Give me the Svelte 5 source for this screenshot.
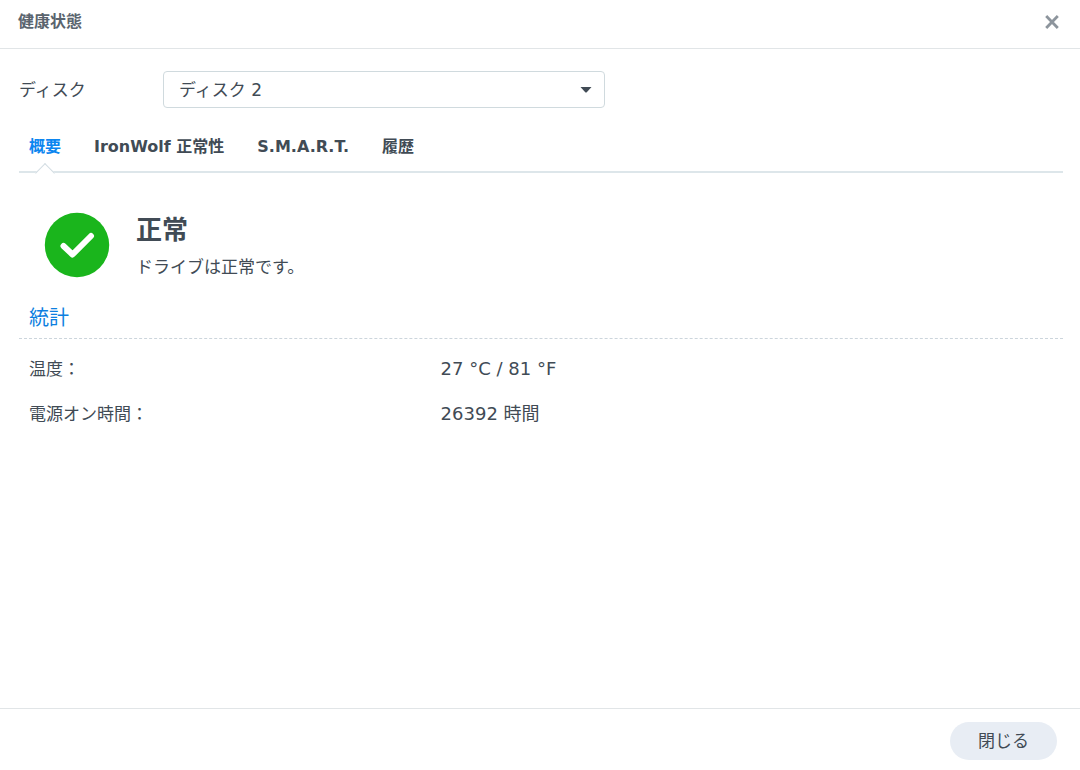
<script>
  let disks = ['ディスク 1', 'ディスク 2', 'ディスク 3', 'ディスク 4'];
  let disk = $state('ディスク 2');

  const tabs = ['概要', 'IronWolf 正常性', 'S.M.A.R.T.', '履歴'];
  let activeTab = $state('概要');
  let open = $state(true);

  const stats = [
    { label: '温度', value: '27 °C / 81 °F' },
    { label: '電源オン時間', value: '26392 時間' }
  ];
</script>

{#if open}
  <div class="dialog" role="dialog" aria-labelledby="dialog-title">
    <header>
      <h1 id="dialog-title">健康状態</h1>
      <button class="close-icon" aria-label="閉じる" onclick={() => (open = false)}>
        <svg width="16" height="14" viewBox="0 0 16 14">
          <path d="M2.2 1L13.8 13M13.8 1L2.2 13" fill="none" stroke="#8d959d" stroke-width="2.8" />
        </svg>
      </button>
    </header>

    <main>
      <div class="disk-row">
        <label for="disk">ディスク</label>
        <div class="select-box">
          <select id="disk" bind:value={disk}>
            {#each disks as d}
              <option value={d}>{d}</option>
            {/each}
          </select>
          <svg class="arrow" width="12" height="6" viewBox="0 0 12 6">
            <path d="M0.5 0H11.5L7 5Q6 6 5 5Z" fill="#414b55" />
          </svg>
        </div>
      </div>

      <div class="tabs" role="tablist">
        {#each tabs as tab}
          <button
            role="tab"
            class:active={activeTab === tab}
            aria-selected={activeTab === tab}
            onclick={() => (activeTab = tab)}
          >{tab}</button>
        {/each}
      </div>

      <section class="status">
        <svg width="66" height="66" viewBox="0 0 66 66">
          <circle cx="33" cy="33" r="32.2" fill="#1ab51c" />
          <path d="M19.5 34L28.5 42.5L47 24" fill="none" stroke="#fff" stroke-width="6" stroke-linecap="round" stroke-linejoin="round" />
        </svg>
        <div>
          <h2>正常</h2>
          <p>ドライブは正常です。</p>
        </div>
      </section>

      <section class="stats">
        <h3>統計</h3>
        <dl>
          {#each stats as row}
            <div class="stat-row">
              <dt>{row.label}：</dt>
              <dd>{row.value}</dd>
            </div>
          {/each}
        </dl>
      </section>
    </main>

    <footer>
      <button class="close-btn" onclick={() => (open = false)}>閉じる</button>
    </footer>
  </div>
{/if}

<style>
  :global(body) {
    margin: 0;
    background: #fff;
  }
  .dialog {
    display: flex;
    flex-direction: column;
    min-height: 100vh;
    box-sizing: border-box;
    color: #414b55;
    font-family: Verdana, 'DejaVu Sans', 'Noto Sans CJK JP', sans-serif;
    font-size: 17px;
    line-height: 24px;
  }
  h1, h2, h3, p, dl, dd { margin: 0; }
  button, select {
    font-family: inherit;
    font-size: inherit;
    line-height: inherit;
    color: inherit;
  }
  button {
    border: none;
    background: none;
    padding: 0;
    cursor: pointer;
  }

  header {
    display: flex;
    align-items: center;
    justify-content: space-between;
    padding: 10px 20px 14px 18px;
    border-bottom: 1px solid #e1e5e7;
  }
  h1 {
    font-size: 16px;
    color: #5a646e;
  }
  .close-icon {
    display: flex;
    padding: 5px 0;
  }

  main {
    flex: 1;
    padding: 22px 17px 0 19px;
  }
  .disk-row {
    display: flex;
    align-items: center;
  }
  .disk-row label { width: 144px; }
  .select-box {
    position: relative;
    width: 442px;
  }
  select {
    display: block;
    width: 100%;
    height: 37px;
    padding: 0 40px 0 15px;
    border: 1px solid #d0dade;
    border-radius: 4px;
    background: #fff;
    appearance: none;
  }
  .arrow {
    position: absolute;
    right: 13px;
    top: 16px;
    pointer-events: none;
  }

  .tabs {
    display: flex;
    gap: 33px;
    margin-top: 17px;
    padding-left: 10px;
    border-bottom: 2px solid #dde6ea;
  }
  .tabs button {
    position: relative;
    padding: 10px 0 12px;
    font-size: 16px;
    font-weight: bold;
  }
  .tabs .active { color: #0c86f0; }
  /* notch that lifts the line under the active tab */
  .tabs .active::after {
    content: '';
    position: absolute;
    left: 50%;
    bottom: -9px;
    width: 13px;
    height: 13px;
    margin-left: -7px;
    border: 1px solid #d3dde3;
    border-right: none;
    border-bottom: none;
    background: #fff;
    transform: rotate(45deg);
  }

  .status {
    display: flex;
    align-items: flex-start;
    gap: 26px;
    padding: 39px 0 0 25px;
  }
  h2 {
    font-size: 26px;
    line-height: 36px;
  }
  .status p { margin-top: 7px; }

  .stats { margin-top: 25px; }
  h3 {
    padding: 0 10px 6px;
    border-bottom: 1px dashed #ccd5dc;
    font-size: 20px;
    line-height: 28px;
    font-weight: normal;
    color: #0c7fe0;
  }
  dl { padding: 8px 10px; }
  .stat-row {
    display: flex;
    gap: 2px;
    padding: 10px 0 11px;
  }
  dt {
    width: 40%;
    flex: none;
  }
  dd { font-size: 18px; }

  footer {
    display: flex;
    justify-content: flex-end;
    padding: 13px 23px 10px;
    border-top: 1px solid #e1e5e7;
  }
  .close-btn {
    padding: 7px 28px;
    border-radius: 19px;
    background: #e8edf4;
  }
</style>
